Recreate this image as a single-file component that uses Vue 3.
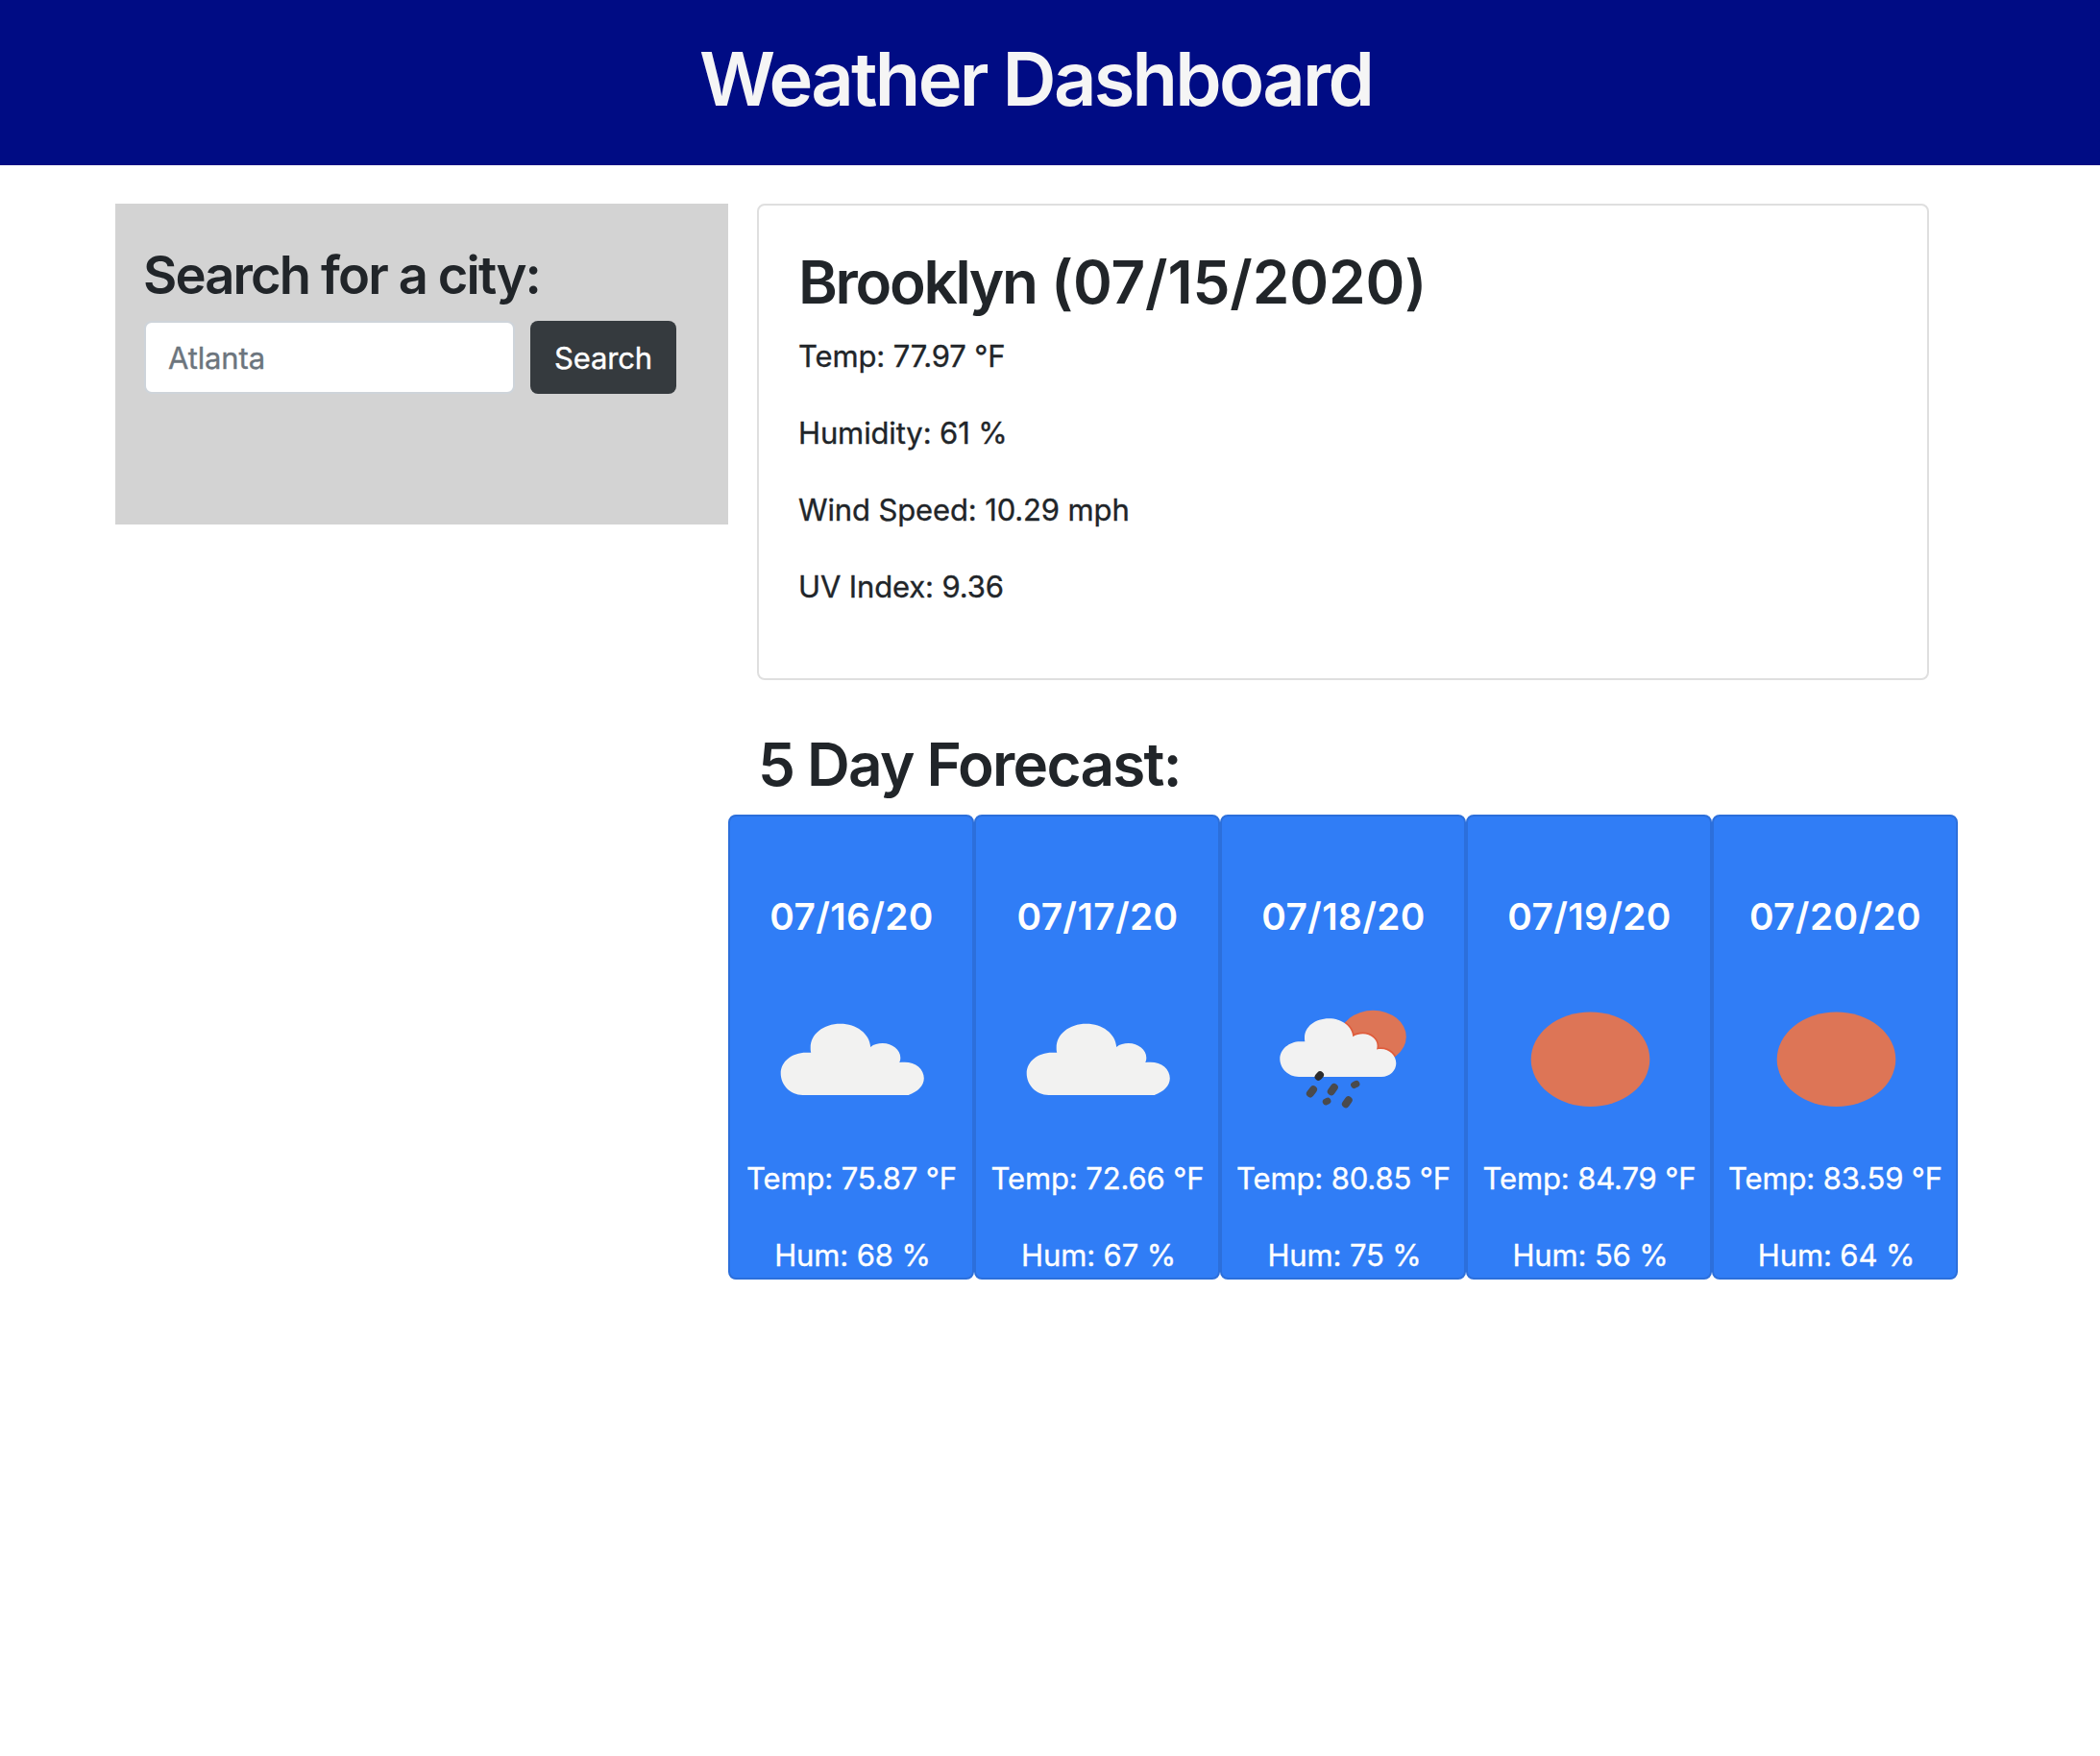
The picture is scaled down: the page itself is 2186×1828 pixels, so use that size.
<script setup>
const current = {
  city: 'Brooklyn',
  date: '(07/15/2020)',
  details: ['Temp: 77.97 °F', 'Humidity: 61 %', 'Wind Speed: 10.29 mph', 'UV Index: 9.36'],
}

const forecast = [
  { date: '07/16/20', icon: 'cloud', temp: '75.87', humidity: 68 },
  { date: '07/17/20', icon: 'cloud', temp: '72.66', humidity: 67 },
  { date: '07/18/20', icon: 'rain', temp: '80.85', humidity: 75 },
  { date: '07/19/20', icon: 'sun', temp: '84.79', humidity: 56 },
  { date: '07/20/20', icon: 'sun', temp: '83.59', humidity: 64 },
]
</script>

<template>
  <div class="page">
    <header class="banner">
      <h1>Weather Dashboard</h1>
    </header>

    <main class="row">
      <aside class="search">
        <h3>Search for a city:</h3>
        <form class="search-form" @submit.prevent>
          <input type="text" placeholder="Atlanta" />
          <button type="submit">Search</button>
        </form>
      </aside>

      <section class="content">
        <article class="current">
          <h2>{{ current.city }} <span class="date">{{ current.date }}</span></h2>
          <p v-for="line in current.details" :key="line">{{ line }}</p>
        </article>

        <h2 class="forecast-title">5 Day Forecast:</h2>

        <div class="forecast">
          <article v-for="day in forecast" :key="day.date" class="day">
            <h5>{{ day.date }}</h5>
            <svg class="icon" viewBox="0 0 200 160" width="200" height="160" aria-hidden="true">
              <path
                v-if="day.icon === 'cloud'"
                fill="#f2f2f1"
                d="M49.700 117C36 117 26.700 106 26.700 94.300C26.700 82 38.500 72.700 53 72.700H58.200C57.700 70.800 57.700 69.500 57.700 67.500C57.700 53.500 71 42.700 88.800 42.700C105.500 42.700 119.300 53 120.200 67C123.500 64 128 63 132.700 63C143 63 151.300 70 151.300 78C151.300 80 151 81.500 150.300 83C152 82.700 153.500 82.700 155.500 82.700C167.500 82.700 175.800 90 175.800 99.500C175.800 107 169.500 113.500 159.600 117Z"
              />
              <ellipse v-else-if="day.icon === 'sun'" cx="101.500" cy="79.800" rx="61.800" ry="49.200" fill="#dd7556" />
              <template v-else>
                <defs>
                  <clipPath id="rain-sun">
                    <ellipse cx="131.300" cy="56.300" rx="34.500" ry="27.500" />
                  </clipPath>
                  <path
                    id="rain-cloud"
                    d="M54 98C43 98 34.300 89 34.300 79.300C34.300 69.500 44 61.300 55.300 61.300H60.300C60 60 60 58.500 60 57C60 46 71 37.300 85.300 37.300C99 37.300 109.500 45.500 110.300 56.200C113.500 54 117 53.300 120.700 53.300C129 53.300 135.600 59 135.600 65.500C135.600 67 135.500 68.200 135 69.500C136.500 69 138 69 139.500 69C148.500 69 155.300 76 155.300 84C155.300 91 149 98 140 98Z"
                  />
                </defs>
                <ellipse cx="131.300" cy="56.300" rx="34.500" ry="27.500" fill="#dd7556" />
                <use href="#rain-cloud" clip-path="url(#rain-sun)" fill="none" stroke="#df5c3c" stroke-width="3.400" />
                <use href="#rain-cloud" fill="#f2f2f2" />
                <g stroke="#4a4a4c" stroke-width="8" stroke-linecap="round">
                  <path stroke="#2c2c2d" stroke-width="7.600" d="M76.200 96L74.400 98" />
                  <path d="M69 111.300L65.900 115.400" />
                  <path d="M90.800 109L87.800 113.300" />
                  <path stroke-width="7" d="M113.900 105.300L111.600 106.500" />
                  <path stroke-width="6.800" d="M84 123.100L82.200 124" />
                  <path d="M105.700 122.200L102.900 126.200" />
                </g>
              </template>
            </svg>
            <p>Temp: {{ day.temp }} °F</p>
            <p>Hum: {{ day.humidity }} %</p>
          </article>
        </div>
      </section>
    </main>
  </div>
</template>

<style>
body {
  margin: 0;
  background: #fff;
}
</style>

<style scoped>
* {
  box-sizing: border-box;
}

.page {
  min-height: 1828px;
  color: #212529;
  font: 400 31px/39px Inter, 'Open Sans', sans-serif;
  letter-spacing: -0.13px;
}

h1,
h2,
h3,
h5 {
  margin: 0;
  font-weight: 600;
}

p {
  margin: 0;
}

p,
input,
button {
  -webkit-text-stroke: 0.35px;
}

.banner {
  height: 172px;
  padding: 34px 30px 0 0;
  background: #000c84;
  color: #f5f5f5;
  text-align: center;
}

h1 {
  font-size: 77.6px;
  line-height: 96px;
  letter-spacing: -2.75px;
}

.row {
  display: flex;
  align-items: flex-start;
  padding: 40px 148px 0 120px;
}

.search {
  width: 638px;
  height: 334px;
  padding: 40px 30px 0 29px;
  background: #d3d3d3;
}

h3 {
  font-size: 54.3px;
  line-height: 68px;
  letter-spacing: -1.86px;
}

.search-form {
  display: flex;
  gap: 16px;
  margin: 14px 0 0 1px;
}

input,
button {
  height: 76px;
  margin: 0;
  border-radius: 8px;
  font: inherit;
  letter-spacing: inherit;
}

input {
  width: 386px;
  padding: 1px 24px 0 23px;
  border: 2px solid #ced4da;
  background: #fff;
  color: #495057;
}

input::placeholder {
  color: #6c757d;
  opacity: 1;
}

button {
  width: 152px;
  padding: 1px 0 0;
  border: 0;
  background: #353a3e;
  color: #fff;
}

.content {
  width: 1280px;
}

.current {
  height: 496px;
  margin: 0 30px;
  padding: 41px 41px;
  border: 2px solid #dfdfdf;
  border-radius: 8px;
}

h2 {
  font-size: 62px;
  line-height: 77px;
  letter-spacing: -2.3px;
}

.date {
  margin-left: 2px;
  letter-spacing: -0.15px;
}

.current h2 {
  margin-bottom: 19px;
}

.current p {
  margin-bottom: 41px;
}

.forecast-title {
  margin: 49px 0 14px 31px;
  letter-spacing: -1.77px;
}

.forecast {
  display: flex;
}

.day {
  display: flex;
  flex: 0 0 256px;
  flex-direction: column;
  align-items: center;
  height: 484px;
  padding: 80px 0 0 1px;
  border: 2px solid #2c6fdb;
  border-radius: 8px;
  background: #307df6;
  color: #fff;
  white-space: nowrap;
}

h5 {
  font-size: 38.8px;
  line-height: 47px;
  letter-spacing: 0.38px;
}

.icon {
  flex: none;
  margin: 46px 1px 24px 0;
  filter: blur(0.4px);
}

.day p + p {
  margin-top: 41px;
  padding-left: 2px;
}
</style>
